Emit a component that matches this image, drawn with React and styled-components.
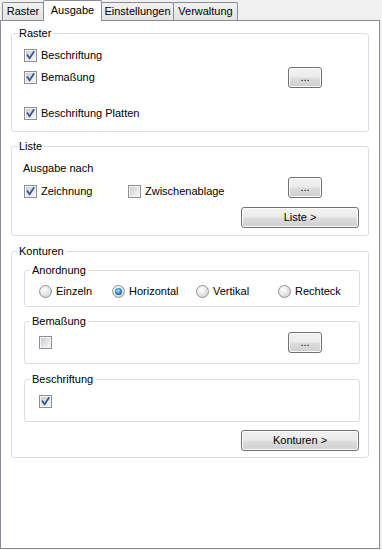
import React from "react";
import styled, { createGlobalStyle } from "styled-components";

const GlobalStyle = createGlobalStyle`
  html, body { margin: 0; padding: 0; background: #f0f0f0; }
  body {
    font-family: "Liberation Sans", Arial, sans-serif;
    font-size: 11px;
    color: #000;
  }
`;

const Window = styled.div`
  width: 382px;
  height: 550px;
  background: #f0f0f0;
`;

const TabStrip = styled.div`
  display: flex;
  align-items: flex-end;
  height: 20px;
  padding-left: 2px;
`;

const Tab = styled.div`
  box-sizing: border-box;
  width: ${p => p.$w}px;
  height: ${p => (p.$active ? 21 : 18)}px;
  margin-left: ${p => (p.$first ? 0 : -1)}px;
  margin-bottom: ${p => (p.$active ? -1 : 0)}px;
  border: 1px solid #898c95;
  border-bottom: none;
  border-radius: 2px 2px 0 0;
  background: ${p => (p.$active ? "#fff" : "linear-gradient(#f2f2f2, #e3e3e3)")};
  position: relative;
  z-index: ${p => (p.$active ? 2 : 1)};
  text-align: center;
  line-height: ${p => (p.$active ? 18 : 16)}px;
  white-space: nowrap;
`;

const Panel = styled.div`
  box-sizing: border-box;
  width: 380px;
  height: 529px;
  border: 1px solid #898c95;
  background: #fff;
  overflow: hidden;
`;

const Group = styled.fieldset`
  margin: ${p => p.$mt}px ${p => (p.$inner ? 0 : 10)}px 0;
  padding: ${p => p.$pt}px ${p => p.$pr}px ${p => p.$pb}px 0;
  border: 1px solid #d5dfe5;
  border-radius: 3px;
  min-width: 0;
`;

const Legend = styled.legend`
  margin-left: 5px;
  padding: 0 2px;
  height: 13px;
  line-height: 13px;
`;

const Body = styled.div`
  padding-left: ${p => p.$pl}px;
`;

const Row = styled.div`
  display: flex;
  align-items: ${p => p.$align || "center"};
  height: ${p => p.$h}px;
  margin-top: ${p => p.$mt || 0}px;
`;

const Footer = styled.div`
  display: flex;
  justify-content: flex-end;
  margin-top: ${p => p.$mt}px;
  padding-right: 1px;
`;

const Text = styled.div`
  height: 13px;
  line-height: 13px;
  margin-left: -1px;
`;

const Item = styled.label`
  display: flex;
  align-items: center;
  gap: 4px;
  height: 13px;
  line-height: 13px;
  width: ${p => (p.$w ? `${p.$w}px` : "auto")};
  flex: none;
  white-space: nowrap;
`;

const Box = styled.span`
  box-sizing: border-box;
  width: 13px;
  height: 13px;
  border: 1px solid #8e8f8f;
  background: #f4f4f4;
  padding: 1px;
  flex: none;
  display: block;
`;

const BoxFill = styled.span`
  display: block;
  width: 9px;
  height: 9px;
  background: linear-gradient(135deg, #c9cdd3 0%, #e2e4e7 55%, #f6f6f6 100%);
  position: relative;
`;

const Mark = styled.svg`
  position: absolute;
  left: -1px;
  top: -1px;
`;

const Radio = styled.span`
  box-sizing: border-box;
  width: 13px;
  height: 13px;
  border-radius: 50%;
  border: 1px solid #939393;
  background: radial-gradient(circle at 40% 35%, #ffffff 0%, #e3e3e3 55%, #c4c4c4 100%);
  display: flex;
  align-items: center;
  justify-content: center;
  flex: none;
`;

const RadioDot = styled.span`
  width: 7px;
  height: 7px;
  border-radius: 50%;
  background: radial-gradient(circle at 45% 40%, #b6e6ff 0%, #46a6e4 35%, #1c5d95 70%, #123c63 100%);
`;

const RadioGrid = styled.div`
  display: grid;
  grid-template-columns: 73px 84px 82px auto;
  height: 13px;
`;

const Button = styled.button`
  box-sizing: border-box;
  width: ${p => p.$w}px;
  height: 21px;
  margin-left: ${p => (p.$push ? "auto" : "0")};
  margin-right: ${p => p.$mr || 0}px;
  padding: 0;
  border: 1px solid #707070;
  border-radius: 3px;
  box-shadow: inset 0 0 0 1px #fbfbfb;
  background: linear-gradient(#f2f2f2 0%, #ebebeb 48%, #dddddd 52%, #cfcfcf 100%);
  font-family: "Liberation Sans", Arial, sans-serif;
  font-size: 11px;
  line-height: 17px;
  color: #000;
  flex: none;
`;

const Check = ({ checked }) => (
  <Box>
    <BoxFill>
      {checked && (
        <Mark width="11" height="11" viewBox="0 0 11 11">
          <path d="M2.5 5.3 L4.6 8.2 L8.7 2.1" fill="none" stroke="#3a5597" strokeWidth="1.8" strokeLinecap="square" />
        </Mark>
      )}
    </BoxFill>
  </Box>
);

const CheckItem = ({ checked, label, w }) => (
  <Item $w={w}>
    <Check checked={checked} />
    {label && <span>{label}</span>}
  </Item>
);

const RadioItem = ({ checked, label }) => (
  <Item>
    <Radio>{checked && <RadioDot />}</Radio>
    <span>{label}</span>
  </Item>
);

const tabs = [
  { label: "Raster", w: 42 },
  { label: "Ausgabe", w: 59, active: true },
  { label: "Einstellungen", w: 73 },
  { label: "Verwaltung", w: 65 },
];

export default function App() {
  return (
    <Window>
      <GlobalStyle />
      <TabStrip>
        {tabs.map((t, i) => (
          <Tab key={t.label} $w={t.w} $active={t.active} $first={i === 0}>
            {t.label}
          </Tab>
        ))}
      </TabStrip>
      <Panel>
        <Group $mt={6} $pt={9} $pr={8} $pb={11}>
          <Legend>Raster</Legend>
          <Body $pl={12}>
            <Row $h={13}>
              <CheckItem checked label="Beschriftung" />
            </Row>
            <Row $h={21} $mt={5}>
              <CheckItem checked label="Bemaßung" />
              <Button $w={34} $push $mr={38}>...</Button>
            </Row>
            <Row $h={13} $mt={19}>
              <CheckItem checked label="Beschriftung Platten" />
            </Row>
          </Body>
        </Group>

        <Group $mt={8} $pt={9} $pr={8} $pb={7}>
          <Legend>Liste</Legend>
          <Body $pl={12}>
            <Text>Ausgabe nach</Text>
            <Row $h={21} $mt={2} $align="flex-end">
              <CheckItem checked label="Zeichnung" w={104} />
              <CheckItem label="Zwischenablage" />
              <Button $w={34} $push $mr={38}>...</Button>
            </Row>
            <Footer $mt={9}>
              <Button $w={118}>Liste &gt;</Button>
            </Footer>
          </Body>
        </Group>

        <Group $mt={9} $pt={6} $pr={8} $pb={6}>
          <Legend>Konturen</Legend>
          <Body $pl={12}>
            <Group $inner $mt={0} $pt={8} $pr={14} $pb={8}>
              <Legend>Anordnung</Legend>
              <Body $pl={14}>
                <RadioGrid>
                  <RadioItem label="Einzeln" />
                  <RadioItem checked label="Horizontal" />
                  <RadioItem label="Vertikal" />
                  <RadioItem label="Rechteck" />
                </RadioGrid>
              </Body>
            </Group>
            <Group $inner $mt={8} $pt={4} $pr={14} $pb={10}>
              <Legend>Bemaßung</Legend>
              <Body $pl={14}>
                <Row $h={21}>
                  <CheckItem />
                  <Button $w={34} $push $mr={23}>...</Button>
                </Row>
              </Body>
            </Group>
            <Group $inner $mt={9} $pt={9} $pr={14} $pb={13}>
              <Legend>Beschriftung</Legend>
              <Body $pl={14}>
                <Row $h={13}>
                  <CheckItem checked />
                </Row>
              </Body>
            </Group>
            <Footer $mt={8}>
              <Button $w={118}>Konturen &gt;</Button>
            </Footer>
          </Body>
        </Group>
      </Panel>
    </Window>
  );
}
